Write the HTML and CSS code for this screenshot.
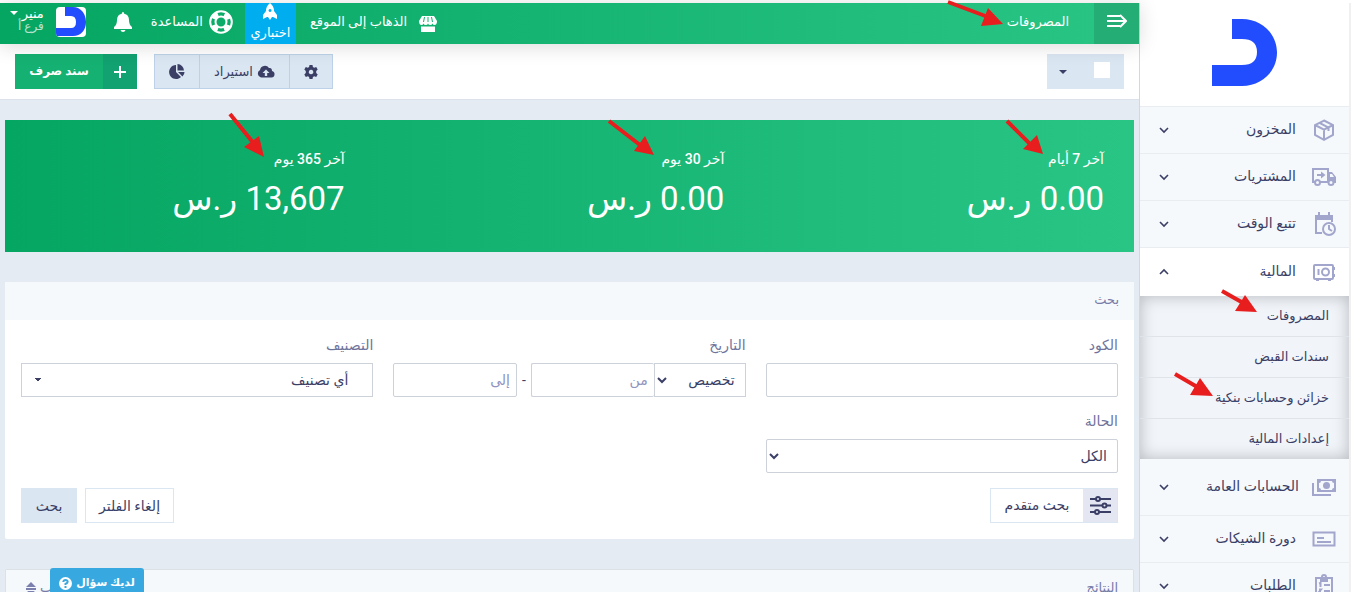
FILE: index.html
```
<!DOCTYPE html>
<html lang="ar" dir="rtl">
	<head>
		<meta charset="utf-8">
		<title>المصروفات</title>
		<link rel="stylesheet" href="styles.css">
	</head>
	<body>
		<!-- Sidebar -->
		<aside class="sidebar">
			<a class="brand" href="#">
				<svg width="66" height="68" viewBox="0 0 66 68"><path fill="#224dff" d="M20 0H30C50 0 65 15 65 33.500S50 67 30 67H0V46H30Q45 46 45 33T30 20H20Z"/></svg>
			</a>
			<nav>
				<ul class="menu">
					<li><a class="menuLink" href="#">
						<svg class="menuIcon" viewBox="0 0 24 24"><path d="M12 2.500 21 7v10l-9 4.800L3 17V7zM3 7l9 4.700L21 7M12 11.700v10M7.500 4.800l9 4.700v3.500"/></svg>
						<span>المخزون</span>
						<svg class="chevron" viewBox="0 0 10 10"><path d="M1 3l4 4 4-4"/></svg>
					</a></li>
					<li><a class="menuLink" href="#">
						<svg class="menuIcon" viewBox="0 0 24 24"><path d="M3 17H1V4h15v13H8M16 17h1M5 10h6"/><path class="solid" d="M9 6.500l4.500 3.500L9 13.500z"/><path class="solid" fill-rule="evenodd" d="M16 7h4l4 5v6h-2a3 3 0 0 0-6 0zM18 9v3h4l-2-3z"/><circle cx="5.500" cy="17.500" r="2.500"/><circle cx="19" cy="17.500" r="2.500"/></svg>
						<span>المشتريات</span>
						<svg class="chevron" viewBox="0 0 10 10"><path d="M1 3l4 4 4-4"/></svg>
					</a></li>
					<li><a class="menuLink" href="#">
						<svg class="menuIcon" viewBox="0 0 24 24"><path d="M10 21H4V4h16v6M7 0v4M17 0v4"/><path class="solid" d="M3 3h18v5H3z"/><circle cx="17" cy="17" r="6"/><path d="M17 13v4l3 2"/></svg>
						<span>تتبع الوقت</span>
						<svg class="chevron" viewBox="0 0 10 10"><path d="M1 3l4 4 4-4"/></svg>
					</a></li>
					<li class="open"><a class="menuLink" href="#">
						<svg class="menuIcon" viewBox="0 0 24 24"><rect x="2" y="5" width="19" height="14" rx="1"/><circle cx="13.500" cy="12" r="3.500"/><path d="M6.500 9v6M22 7v3M22 14v3M4 20h3M16 20h3"/></svg>
						<span>المالية</span>
						<svg class="chevron" viewBox="0 0 10 10"><path d="M1 7l4-4 4 4"/></svg>
					</a>
						<ul class="submenu">
							<li><a href="#">المصروفات</a></li>
							<li><a href="#">سندات القبض</a></li>
							<li><a href="#">خزائن وحسابات بنكية</a></li>
							<li><a href="#">إعدادات المالية</a></li>
						</ul>
					</li>
					<li class="tall"><a class="menuLink" href="#">
						<svg class="menuIcon" viewBox="0 0 24 24"><path class="solid" fill-rule="evenodd" d="M5 4h19v13H5zM9 6q0 2-2 2v5q2 0 2 2h11q0-2 2-2V8q-2 0-2-2z"/><circle class="solid" cx="14.500" cy="10.500" r="3.500"/><path d="M1 8v12h18"/></svg>
						<span>الحسابات العامة</span>
						<svg class="chevron" viewBox="0 0 10 10"><path d="M1 3l4 4 4-4"/></svg>
					</a></li>
					<li><a class="menuLink" href="#">
						<svg class="menuIcon" viewBox="0 0 24 24"><path d="M1.500 5.500h21v13h-21zM5 11h7M5 15h14"/></svg>
						<span>دورة الشيكات</span>
						<svg class="chevron" viewBox="0 0 10 10"><path d="M1 3l4 4 4-4"/></svg>
					</a></li>
					<li><a class="menuLink" href="#">
						<svg class="menuIcon" viewBox="0 0 24 24"><path d="M4 4h16v19H4zM12 11h6M12 17h6M7 9.500l1.500-.5v4M7 15.500h2L7 18h2"/><path class="solid" d="M8 3h8v5H8z"/><circle cx="12" cy="3" r="2"/></svg>
						<span>الطلبات</span>
						<svg class="chevron" viewBox="0 0 10 10"><path d="M1 3l4 4 4-4"/></svg>
					</a></li>
				</ul>
			</nav>
		</aside>

		<div class="page">
			<!-- Top bar -->
			<header class="topbar">
				<button class="toggle" type="button" aria-label="القائمة">
					<svg width="20" height="14" viewBox="0 0 20 14"><path fill="none" stroke="#fff" stroke-width="2" d="M0 2h13M0 7h18M0 12h13M13 1l6 6-6 6"/></svg>
				</button>
				<h1 class="pageTitle">المصروفات</h1>
				<a class="topLink" href="#">
					<svg width="18" height="16" viewBox="0 0 18 16"><path fill="#fff" d="M3 0h12l3 5q0 4-2.500 4-1.500 0-2-1.500Q13 9 11.200 9 9.500 9 9 7.500 8.500 9 6.800 9 5 9 4.500 7.500 4 9 2.500 9 0 9 0 5zM2 10.500h14V16H2z"/><path stroke="#13b06e" d="M5.500 1l-1 5M9 1v5M12.500 1l1 5"/></svg>
					<span>الذهاب إلى الموقع</span>
				</a>
				<a class="trial" href="#">
					<svg width="14" height="17" viewBox="0 0 14 17"><path fill="#fff" fill-rule="evenodd" d="M7 0q4 3 4 8l3 4v4l-4-2H9l-2 3-2-3H4l-4 2v-4l3-4q0-5 4-8zM7 6a1.500 1.500 0 1 0 .1 0z"/></svg>
					<span>اختباري</span>
				</a>
				<a class="topLink help" href="#">
					<svg width="24" height="24" viewBox="0 0 24 24" fill="none" stroke="#fff"><circle cx="12" cy="12" r="10.800" stroke-width="2"/><circle cx="12" cy="12" r="5.500" stroke-width="2"/><circle cx="12" cy="12" r="8.300" stroke-width="5" stroke-dasharray="6.500 6.540" stroke-dashoffset="-3.200"/></svg>
					<span>المساعدة</span>
				</a>
				<button class="bell" type="button" aria-label="الإشعارات">
					<svg width="18" height="20" viewBox="0 0 18 20"><path fill="#fff" d="M9 0q1.200 0 1.200 1.700Q15 2.800 15 8q0 5 3 7v2H0v-2q3-2 3-7 0-5.200 4.800-6.300Q7.800 0 9 0zM6.500 18h5q-.5 2-2.500 2t-2.500-2z"/></svg>
				</button>
				<button class="user" type="button">
					<span class="avatar"><svg width="30" height="30" viewBox="0 0 30 30"><path fill="#224dff" d="M9 0h8C25 0 30 7 30 15s-5 14-13 14H0v-8h15q5 0 5-6t-5-6H9z"/></svg></span>
					<span class="userName">منير<small>فرع أ</small></span>
					<span class="caret"></span>
				</button>
			</header>

			<!-- Actions -->
			<div class="toolbar">
				<label class="selectAll">
					<input type="checkbox" aria-label="تحديد الكل">
					<span class="caret"></span>
				</label>
				<div class="toolGroup">
					<button type="button" aria-label="الإعدادات">
						<svg width="14" height="14" viewBox="0 0 14 14"><path fill="#3b3f66" fill-rule="evenodd" d="M5.500 0h3l.4 2 1.300.8 2-.7 1.500 2.500L12.200 6v2l1.500 1.400-1.500 2.500-2-.7-1.300.8-.4 2h-3l-.4-2-1.300-.8-2 .7L.3 9.400 1.800 8V6L.3 4.600l1.500-2.500 2 .7L5.100 2zM7 4.700a2.300 2.300 0 1 0 .1 0z"/></svg>
					</button>
					<button type="button">
						<svg width="18" height="13" viewBox="0 0 18 13"><path fill="#3b3f66" fill-rule="evenodd" d="M4 12.500A4 4 0 0 1 3 5 5 5 0 0 1 12 3q3-.5 3 3a3.300 3.300 0 0 1-.5 6.500zM9 4.500L5.500 8h2.300v3h2.400V8h2.300z"/></svg>
						استيراد
					</button>
					<button type="button" aria-label="التقارير">
						<svg width="16" height="15" viewBox="0 0 16 15"><path fill="#3b3f66" d="M7 1v7l5 5A7 7 0 1 1 7 1zM8.500 0A7 7 0 0 1 15 6.500H8.500zM9 8h6.500a6 6 0 0 1-2 4.500z"/></svg>
					</button>
				</div>
				<button class="addButton" type="button">
					<span class="plus"><svg width="12" height="12" viewBox="0 0 12 12"><path stroke="#fff" stroke-width="2" d="M6 0v12M0 6h12"/></svg></span>
					<span class="addText">سند صرف</span>
				</button>
			</div>

			<main>
				<section class="stats">
					<div class="statsRow">
						<div><p>آخر 7 أيام</p><strong>0.00 ر.س</strong></div>
						<div><p>آخر 30 يوم</p><strong>0.00 ر.س</strong></div>
						<div><p>آخر 365 يوم</p><strong>13,607 ر.س</strong></div>
					</div>
				</section>

				<section class="card">
					<h2 class="cardHeader">بحث</h2>
					<form class="cardBody">
						<div class="fields">
							<div>
								<label for="code">الكود</label>
								<input type="text" id="code">
							</div>
							<div>
								<label for="dateType">التاريخ</label>
								<div class="dates">
									<select id="dateType"><option>تخصيص</option></select>
									<input class="from" type="text" placeholder="من" aria-label="من">
									<span>-</span>
									<input type="text" placeholder="إلى" aria-label="إلى">
								</div>
							</div>
							<div>
								<label for="category">التصنيف</label>
								<select id="category" class="picker"><option>أي تصنيف</option></select>
							</div>
							<div>
								<label for="status">الحالة</label>
								<select id="status"><option>الكل</option></select>
							</div>
						</div>
						<div class="actions">
							<button class="advanced" type="button">
								<span class="sliders"><svg width="21" height="19" viewBox="0 0 21 19"><path stroke="#3b3f66" stroke-width="2" d="M0 3h21M0 9.500h21M0 16h21"/><g fill="#e4e6f2" stroke="#3b3f66" stroke-width="2"><circle cx="8" cy="3" r="2"/><circle cx="14.500" cy="9.500" r="2"/><circle cx="7" cy="16" r="2"/></g></svg></span>
								<span class="advancedText">بحث متقدم</span>
							</button>
							<button class="reset" type="reset">إلغاء الفلتر</button>
							<button class="search" type="submit">بحث</button>
						</div>
					</form>
				</section>

				<section class="card results">
					<h2 class="cardHeader">النتائج <a class="sort" href="#">ترتيب حسب
						<svg width="10" height="12" viewBox="0 0 10 12"><path fill="#7b7fae" d="M5 0l5 5H0zM0 6h10v2H0zM1 9h8l-4 3z"/></svg></a></h2>
				</section>
			</main>
		</div>

		<button class="question" type="button">
			لديك سؤال
			<svg width="13" height="13" viewBox="0 0 13 13"><circle cx="6.500" cy="6.500" r="6.500" fill="#fff"/><path fill="none" stroke="#38a8e0" stroke-width="2" d="M4.300 5q.2-2 2.200-2t2.200 1.800Q8.700 6 6.500 7v1M6.500 9v2"/></svg>
		</button>

		<!-- Tour arrows -->
		<svg class="arrows" width="1351" height="592" viewBox="0 0 1351 592">
			<g stroke="#e81e1e" stroke-width="4">
				<path d="M948 2L988 17M230 114L255 145M609 121L640 145M1007 121L1032 146M1222 291L1245 304M1175 374L1199 388"/>
			</g>
			<g fill="#e81e1e">
				<path d="M1003 24l-22 2 7-18zM264 157l-20-10 15-11zM654 155l-20-4 11-15zM1043 154l-20-5 14-14zM1257 312l-22-1 10-16zM1213 396l-23-1 10-17z"/>
			</g>
		</svg>
	</body>
</html>
```
FILE: styles.css
```
*
{
	box-sizing: border-box;
}
body
{
	margin: 0;
	padding-top: 3px;
	height: 100vh;
	overflow: hidden;
	display: flex;
	position: relative;
	background-color: #ffffff;
	color: #3b3f66;
	font-family: Roboto, "DejaVu Sans", sans-serif;
	font-size: 14px;
	line-height: 20px;
}
button, input, select
{
	font: inherit;
	color: inherit;
	border-radius: 0;
}
button
{
	border: 0;
	padding: 0;
	background: none;
	cursor: pointer;
}
a
{
	color: inherit;
	text-decoration: none;
}
ul
{
	list-style: none;
	margin: 0;
	padding: 0;
}
h1, h2, p
{
	margin: 0;
	font-size: inherit;
	font-weight: normal;
}
svg
{
	flex: none;
}

/* Sidebar */
.sidebar
{
	flex: none;
	width: 212px;
	border-left: 1px solid #d3d8de;
	border-right: 2px solid #f0f0f0;
	background-color: #f5f9fc;
}
.brand
{
	display: flex;
	height: 103px;
	padding-top: 16px;
	justify-content: center;
	background-color: #ffffff;
}
.menuLink
{
	display: flex;
	align-items: center;
	height: 47px;
	padding: 0 13px 0 19px;
	border-top: 1px solid #e9edf1;
}
.menuLink span
{
	flex: 1;
	padding: 0 16px 2px 0;
}
.menuIcon
{
	width: 24px;
	height: 24px;
	fill: none;
	stroke: #a3a6cc;
	stroke-width: 2;
}
.menuIcon .solid
{
	fill: #a3a6cc;
	stroke: none;
}
.chevron
{
	width: 10px;
	height: 10px;
	fill: none;
	stroke: #3b3f66;
	stroke-width: 1.6;
}
.open .menuLink
{
	height: 49px;
	background-color: #ffffff;
}
.tall .menuLink
{
	height: 56px;
	border-top: 0;
}
.tall .menuLink span
{
	padding-right: 13px;
}
.submenu
{
	background-color: #f1f5fa;
	box-shadow: inset 0 0 16px rgba(0, 0, 0, 0.25);
	font-size: 13px;
}
.submenu a
{
	display: block;
	padding: 10px 20px;
}
.submenu li + li
{
	border-top: 1px solid #dfe4ea;
}

/* Top bar */
.page
{
	flex: 1;
	min-width: 0;
	background-color: #e4ebf3;
}
.topbar
{
	display: flex;
	align-items: center;
	height: 41px;
	position: relative;
	background-image: linear-gradient(to right, #05a562, #29c585);
	box-shadow: 0 2px 20px rgba(0, 0, 0, 0.15);
	color: #ffffff;
	font-size: 13px;
}
.toggle
{
	width: 45px;
	height: 41px;
	background-color: #24ae76;
}
.pageTitle
{
	margin-right: 25px;
	padding-bottom: 3px;
	flex: 1;
}
.topLink
{
	display: flex;
	align-items: center;
	gap: 12px;
	padding-left: 14px;
}
.topLink span
{
	padding-bottom: 4px;
}
.help
{
	gap: 6px;
	padding: 0 12px 0 19px;
}
.help svg
{
	margin-bottom: 4px;
}
.trial
{
	display: flex;
	flex-direction: column;
	align-items: center;
	gap: 3px;
	width: 51px;
	height: 41px;
	background-color: #00aeef;
}
.bell
{
	height: 24px;
}
.user
{
	display: flex;
	gap: 12px;
	padding: 0 28px 0 10px;
	text-align: right;
}
.avatar
{
	width: 30px;
	height: 30px;
	overflow: hidden;
	border-radius: 4px;
	background-color: #ffffff;
}
.userName
{
	line-height: 13px;
}
.userName small
{
	display: block;
	font-size: 12px;
	opacity: 0.7;
}
.caret
{
	border: 4px solid transparent;
	border-top-color: currentColor;
	border-bottom: 0;
}
.user .caret
{
	margin: 4px -12px 0 0;
}
.user .avatar
{
	margin-bottom: 4px;
}

/* Toolbar */
.toolbar
{
	display: flex;
	gap: 17px;
	padding: 10px 15px;
	background-color: #ffffff;
	border-bottom: 1px solid #dce2e9;
	font-size: 13px;
}
.selectAll
{
	display: flex;
	align-items: center;
	justify-content: space-between;
	width: 77px;
	height: 35px;
	padding: 0 14px 0 12px;
	margin-left: auto;
	background-color: #dae6f2;
}
.selectAll input
{
	appearance: none;
	width: 16px;
	height: 16px;
	margin: 0 0 3px;
	background-color: #ffffff;
}
.toolGroup
{
	display: flex;
	border: 1px solid #bdd1e8;
	background-color: #dae6f2;
}
.toolGroup button
{
	display: flex;
	align-items: center;
	gap: 4px;
	padding: 0 14px;
}
.toolGroup button + button
{
	border-right: 1px solid #bdd1e8;
}
.addButton
{
	display: flex;
	height: 35px;
	background-color: #15b172;
	color: #ffffff;
	font-size: 12px;
	font-weight: bold;
}
.plus
{
	display: flex;
	align-items: center;
	justify-content: center;
	width: 34px;
	height: 35px;
	background-color: #12a170;
}
.addText
{
	width: 88px;
	line-height: 35px;
}

/* Totals */
main
{
	padding: 20px 5px 0;
}
.stats
{
	padding: 29px 0;
	background-image: linear-gradient(to right, #05a562, #29c585);
	color: #ffffff;
}
.statsRow
{
	display: grid;
	grid-template-columns: repeat(3, 1fr);
	margin: 0 -5px;
}
.statsRow div
{
	padding-right: 35px;
}
.statsRow p
{
	font-weight: 500;
}
.statsRow strong
{
	display: block;
	margin-top: 6px;
	font-size: 33px;
	line-height: 48px;
	font-weight: normal;
}

/* Search form */
.card
{
	margin-top: 30px;
	border-radius: 2px;
	background-color: #ffffff;
}
.cardHeader
{
	display: flex;
	align-items: center;
	justify-content: space-between;
	height: 38px;
	padding: 0 15px 2px 20px;
	background-color: #f5f9fc;
	color: #777ba8;
	font-size: 13px;
	font-weight: 500;
}
.cardBody
{
	padding: 15px 16px 16px;
}
.fields
{
	display: grid;
	grid-template-columns: repeat(3, 1fr);
	gap: 14px 20px;
}
.fields label
{
	display: block;
	margin-bottom: 8px;
	color: #70749c;
	font-weight: 500;
}
.fields input, .fields select
{
	display: block;
	width: 100%;
	height: 34px;
	padding: 0 6px;
	border: 1px solid #cdd1d9;
	border-radius: 2px;
	background-color: #ffffff;
}
.fields input::placeholder
{
	color: #8f94c0;
}
.dates
{
	display: flex;
	align-items: center;
}
.dates span
{
	flex: none;
	width: 14px;
	text-align: center;
}
.fields .dates select
{
	flex: none;
	width: 92px;
	border-radius: 0;
}
.fields .dates input
{
	flex: 1;
	min-width: 0;
}
.fields .dates .from
{
	border-right: 0;
}
.fields .picker
{
	appearance: none;
	padding: 0 24px;
	border-radius: 0;
	background-image: linear-gradient(to bottom left, #3b3f66 50%, transparent 50%), linear-gradient(to bottom right, #3b3f66 50%, transparent 50%);
	background-size: 4px 4px;
	background-position: 12px 14px, 16px 14px;
	background-repeat: no-repeat;
}
.actions
{
	display: flex;
	gap: 8px;
	margin-top: 15px;
}
.actions button
{
	height: 35px;
}
.advanced
{
	display: flex;
	margin-left: auto;
	border: 1px solid #dae6f2;
}
.sliders
{
	display: flex;
	align-items: center;
	justify-content: center;
	width: 34px;
	height: 33px;
	background-color: #e4e6f2;
}
.advancedText
{
	width: 92px;
	line-height: 33px;
}
.actions .reset
{
	width: 89px;
	border: 1px solid #dae6f2;
}
.actions .search
{
	width: 56px;
	background-color: #dae6f2;
}
.results
{
	border: 1px solid #dce1e6;
}
.sort
{
	display: flex;
	align-items: center;
	gap: 4px;
}

/* Help badge in the corner */
.question
{
	display: flex;
	align-items: center;
	justify-content: center;
	gap: 4px;
	position: absolute;
	left: 50px;
	bottom: 0;
	width: 94px;
	height: 24px;
	padding-top: 6px;
	border-radius: 3px 3px 0 0;
	background-color: #38a8e0;
	color: #ffffff;
	font-size: 11px;
	font-weight: bold;
}
.arrows
{
	position: absolute;
	top: 0;
	right: 0;
	pointer-events: none;
}
```
